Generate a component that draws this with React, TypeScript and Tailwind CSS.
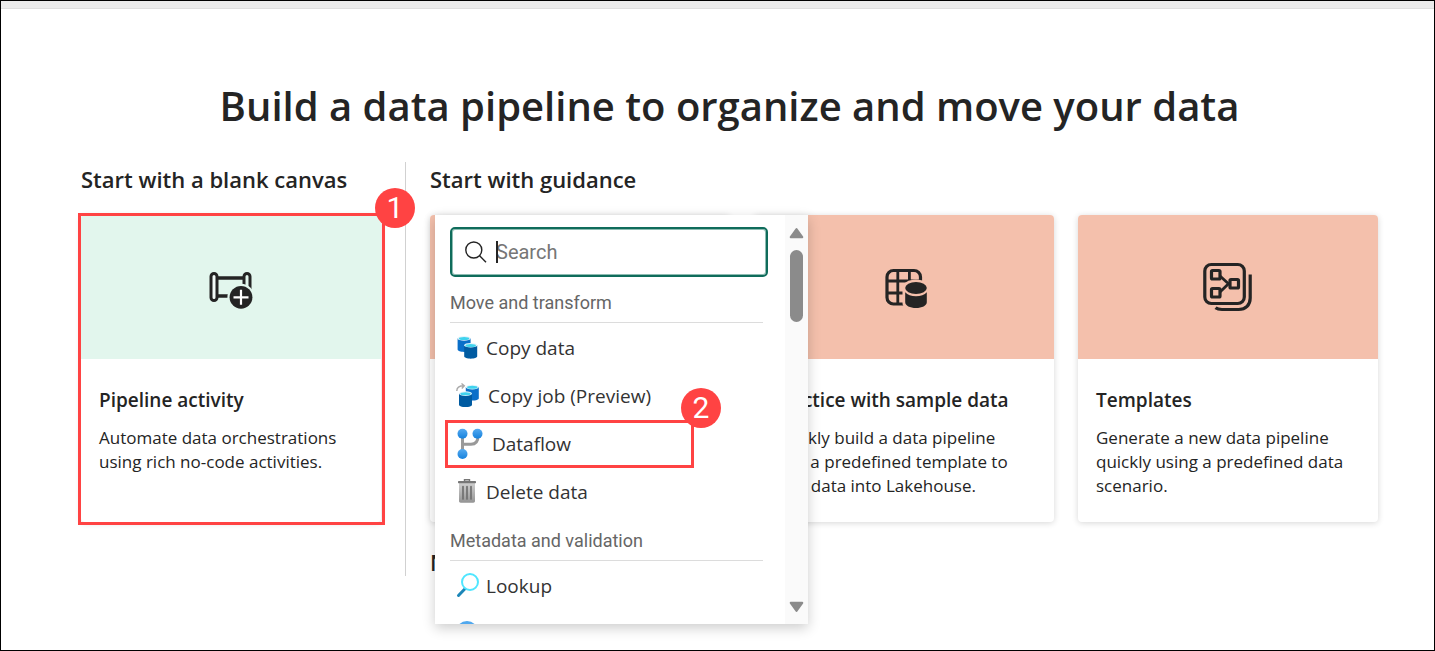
import type { ReactNode } from "react";

function PipelineIcon() {
  return (
    <svg viewBox="0 0 48 48" className="size-12 overflow-visible" fill="none" aria-hidden="true">
      <path d="M10 15h27M10 33h14" stroke="#242424" strokeWidth="3.4" />
      <rect x="4" y="10.5" width="6" height="27" rx="3" stroke="#242424" strokeWidth="3" fill="#fff" fillOpacity=".6" />
      <rect x="37" y="10.5" width="6" height="27" rx="3" stroke="#242424" strokeWidth="3" />
      <circle cx="34" cy="34.3" r="13.6" fill="#e2f6ed" />
      <circle cx="34" cy="34.3" r="11.4" fill="#242424" />
      <path d="M34 26.8v15M26.5 34.3h15" stroke="#fff" strokeWidth="2.2" />
    </svg>
  );
}

function SampleDataIcon() {
  return (
    <svg viewBox="0 0 48 48" className="size-12 overflow-visible" fill="none" aria-hidden="true">
      <rect x="7" y="7.5" width="33.5" height="33.5" rx="6.5" stroke="#242424" strokeWidth="3.2" />
      <path d="M17.8 7v34M29.4 7v34M7 18h33M7 30h33" stroke="#242424" strokeWidth="2.8" />
      <path d="M22.5 25c0-5 6-8.5 13.5-8.5S49.5 20 49.5 25v15c0 5-6 8-13.5 8s-13.5-3-13.5-8z" fill="#f4c0ac" />
      <ellipse cx="36" cy="25" rx="10.8" ry="5.9" fill="#242424" />
      <path d="M25.2 29.3c2.2 2.5 6.2 3.9 10.8 3.9s8.6-1.4 10.8-3.9v10c0 3.4-4.8 5.8-10.8 5.8s-10.8-2.4-10.8-5.8z" fill="#242424" />
    </svg>
  );
}

function TemplatesIcon() {
  return (
    <svg viewBox="0 0 48 48" className="size-12 overflow-visible" fill="none" stroke="#242424" strokeWidth="3.2" aria-hidden="true">
      <rect x="0.8" y="1.5" width="39.5" height="39" rx="6.5" />
      <path d="M46.2 11.5V35c0 7-4.5 11.5-11.5 11.5H18c-3 0-5-.6-6.5-1.8" />
      <rect x="7.5" y="7.5" width="8.5" height="8.5" rx="1" />
      <rect x="7.5" y="25.5" width="8.5" height="8.5" rx="1" />
      <rect x="26" y="16.5" width="8.5" height="8.5" rx="1" />
      <path d="M16 13l8.5 7.8L16 29" strokeWidth="2.8" />
    </svg>
  );
}

function Cylinder({ x, y, dark }: { x: number; y: number; dark?: boolean }) {
  return (
    <g transform={`translate(${x} ${y})`}>
      <path d="M0 2.3v11.2c0 1.3 2.9 2.4 6.5 2.4s6.5-1.1 6.5-2.4V2.3z" fill={dark ? "#005ba1" : "#0a6fc9"} />
      <ellipse cx="6.5" cy="2.4" rx="6.5" ry="2.3" fill="#e4f4fb" />
      <ellipse cx="6.5" cy="2.6" rx="5.2" ry="1.5" fill="#3fd3ee" />
    </g>
  );
}

function CopyDataIcon() {
  return (
    <svg viewBox="0 0 22 24" className="h-6 w-[22px] shrink-0 overflow-visible" aria-hidden="true">
      <Cylinder x={1.6} y={0} />
      <Cylinder x={8.2} y={6.8} dark />
    </svg>
  );
}

function CopyJobIcon() {
  return (
    <svg viewBox="0 0 24 24" className="h-6 w-6 shrink-0 overflow-visible" aria-hidden="true">
      <path d="M.8 7C.8 3.5 3 1.8 8 1.8M5.500-.5l2.8 2.3-2.5 2.7" fill="none" stroke="#a9a9a9" strokeWidth="1.4" />
      <Cylinder x={9.8} y={0.7} />
      <Cylinder x={3} y={7.2} dark />
    </svg>
  );
}

function DataflowIcon() {
  return (
    <svg viewBox="0 0 28 32" className="h-8 w-7 shrink-0" aria-hidden="true">
      <defs>
        <linearGradient id="node" x1="0" y1="0" x2="0" y2="1">
          <stop offset="0" stopColor="#55aaf0" />
          <stop offset="1" stopColor="#1681dc" />
        </linearGradient>
      </defs>
      <path d="M6.5 6v20M6.5 16.2H15c4.5 0 7-3 7-8" fill="none" stroke="#999" strokeWidth="3" />
      <circle cx="6.5" cy="5.7" r="5" fill="url(#node)" />
      <circle cx="21.5" cy="5.7" r="5" fill="url(#node)" />
      <circle cx="6.5" cy="26" r="5" fill="url(#node)" />
    </svg>
  );
}

function TrashIcon() {
  return (
    <svg viewBox="0 0 22 26" className="h-[26px] w-[22px] shrink-0" aria-hidden="true">
      <defs>
        <linearGradient id="bin" x1="0" y1="0" x2="0" y2="1">
          <stop offset="0" stopColor="#cfcfcf" />
          <stop offset="1" stopColor="#949494" />
        </linearGradient>
      </defs>
      <path d="M8.5 2V.8h5V2" fill="none" stroke="#777" strokeWidth="1.4" />
      <path d="M3 4h16v18c0 1-.7 1.7-1.7 1.7H4.7c-1 0-1.7-.7-1.7-1.7z" fill="url(#bin)" />
      <rect x="2" y="2" width="18" height="2.2" rx=".6" fill="#777" />
      <path d="M7 7.5V20M11 7.5V20M15 7.5V20" stroke="#707070" strokeWidth="1.7" strokeLinecap="round" />
    </svg>
  );
}

function LookupIcon() {
  return (
    <svg viewBox="0 0 22 24" className="h-6 w-[22px] shrink-0 overflow-visible" fill="none" aria-hidden="true">
      <path d="M9 14.8L2.5 21.5" stroke="#1c86b8" strokeWidth="3" strokeLinecap="round" />
      <circle cx="14" cy="8" r="8" stroke="#50e6ff" strokeWidth="2" fill="#fff" />
    </svg>
  );
}

function Step({ label, place }: { label: string; place: string }) {
  return (
    <span
      className={`absolute z-20 flex size-10 items-center justify-center rounded-full bg-[#ff4343] font-[Roboto,sans-serif] text-[30px] leading-10 text-white ${place}`}
    >
      {label}
    </span>
  );
}

type CardProps = { title: string; lines: string[]; icon: ReactNode; tone: string };

function Card({ title, lines, icon, tone }: CardProps) {
  return (
    <a href="#" className="flex min-h-[307px] flex-col overflow-hidden rounded bg-white shadow-[0_1px_6px_rgba(0,0,0,0.16)]">
      <span className={`flex h-36 items-center justify-center ${tone}`}>{icon}</span>
      <span className="flex flex-col gap-3 px-[18px] pt-[27px] pb-6">
        <span className="text-[19px] leading-7 font-semibold whitespace-nowrap">{title}</span>
        <span className="text-[17px] leading-6">
          {lines.map((line) => (
            <span key={line} className="block whitespace-nowrap">
              {line}
            </span>
          ))}
        </span>
      </span>
    </a>
  );
}

function Category({ children }: { children: ReactNode }) {
  return (
    <h3 className="mr-[22px] ml-[15px] border-b border-[#dcdcdc] pt-3.5 pb-[7px] font-[Roboto,sans-serif] text-[18px] leading-6 text-[#666]">
      {children}
    </h3>
  );
}

type ItemProps = { icon: ReactNode; label?: string; name?: string; children?: ReactNode };

function Item({ icon, label, name, children }: ItemProps) {
  return (
    <li className="relative">
      <button
        type="button"
        aria-label={name}
        className="flex h-12 w-full items-center gap-2 pt-0.5 pl-[21px] text-left text-[19px] leading-7 text-[#333]"
      >
        {icon}
        {label}
      </button>
      {children}
    </li>
  );
}

function ActivityMenu() {
  return (
    <div className="absolute top-0 left-[5px] z-10 flex h-[409px] w-[373px] bg-white shadow-[0_4px_12px_rgba(0,0,0,0.2)]">
      <div className="min-w-0 flex-1 overflow-hidden pt-3">
        <label className="relative mr-[17px] ml-[15px] flex h-[50px] items-center gap-2 rounded-[5px] border-2 border-[#0f6c5b] pl-3 font-[Roboto,sans-serif] text-[20px] shadow-[inset_0_0_0_1px_#8dbcb2]">
          <svg viewBox="0 0 24 24" className="size-6 shrink-0" fill="none" stroke="#242424" strokeWidth="1.4" aria-hidden="true">
            <circle cx="9.8" cy="10" r="8" />
            <path d="M15.6 15.8l6.4 6.4" />
          </svg>
          <span className="absolute left-11 h-[22px] w-0.5 bg-[#242424]" />
          <input
            type="text"
            aria-label="Search"
            placeholder="Search"
            className="h-8 min-w-0 flex-1 bg-transparent caret-transparent outline-none placeholder:text-[#767676]"
          />
        </label>
        <Category>Move and transform</Category>
        <ul>
          <Item icon={<CopyDataIcon />} label="Copy data" />
          <Item icon={<CopyJobIcon />} label="Copy job (Preview)" />
          <Item icon={<DataflowIcon />} label="Dataflow">
            <span className="pointer-events-none absolute top-px left-2.5 h-12 w-[249px] border-3 border-[#ff4343]" />
            <Step label="2" place="-top-[31px] left-[246px]" />
          </Item>
          <Item icon={<TrashIcon />} label="Delete data" />
        </ul>
        <Category>Metadata and validation</Category>
        <ul>
          <Item icon={<LookupIcon />} label="Lookup" />
          <Item
            name="Get metadata"
            icon={
              <svg viewBox="0 0 22 26" className="h-[26px] w-[22px] shrink-0" aria-hidden="true">
                <circle cx="11" cy="11" r="11" fill="#50a8ee" />
              </svg>
            }
          />
        </ul>
      </div>
      <div className="flex w-[23px] flex-col items-center bg-[#fafafa] pt-3 pb-[11px]" aria-hidden="true">
        <svg viewBox="0 0 16 12" className="h-3 w-4">
          <path d="M7.5 2l5.8 8.2H1.7z" fill="#8b8b8b" stroke="#8b8b8b" strokeWidth="2" strokeLinejoin="round" />
        </svg>
        <span className="mt-[11px] h-[72px] w-[13px] rounded-full bg-[#8b8b8b]" />
        <svg viewBox="0 0 16 12" className="mt-auto h-3 w-4">
          <path d="M7.5 10l5.8-8.2H1.7z" fill="#8b8b8b" stroke="#8b8b8b" strokeWidth="2" strokeLinejoin="round" />
        </svg>
      </div>
    </div>
  );
}

export default function App() {
  return (
    <div className="min-h-screen border border-black bg-white font-['Open_Sans','Noto_Sans',sans-serif] text-[#242424]">
      <div className="h-2 border-b border-[#dedede] bg-[#ebebeb]" />
      <main className="pt-[67px] pr-14 pl-20">
        <h1 className="text-center text-[40px] leading-[60px] font-semibold whitespace-nowrap">
          Build a data pipeline to organize and move your data
        </h1>
        <div className="mt-[26px] flex gap-6">
          <section className="w-[300px] shrink-0 pt-[3px]">
            <h2 className="text-[22px] leading-7 font-semibold whitespace-nowrap">Start with a blank canvas</h2>
            <div className="relative mt-[22px]">
              <Card
                title="Pipeline activity"
                lines={["Automate data orchestrations", "using rich no-code activities."]}
                tone="bg-[#e2f6ed]"
                icon={<PipelineIcon />}
              />
              <span className="pointer-events-none absolute -top-0.5 -right-1 -bottom-[3px] -left-[3px] border-3 border-[#ff4343]" />
              <Step label="1" place="-top-[27px] -right-[34px]" />
            </div>
          </section>
          <div className="w-px bg-[#d1d1d1]" />
          <section className="min-w-0 flex-1 pt-[3px]">
            <h2 className="text-[22px] leading-7 font-semibold whitespace-nowrap">Start with guidance</h2>
            <div className="relative mt-[22px] grid grid-cols-3 gap-6">
              <Card title="" lines={[]} tone="bg-[#f4c0ac]" icon={null} />
              <Card
                title="Practice with sample data"
                lines={["Quickly build a data pipeline", "with a predefined template to", "load data into Lakehouse."]}
                tone="bg-[#f4c0ac]"
                icon={<SampleDataIcon />}
              />
              <Card
                title="Templates"
                lines={["Generate a new data pipeline", "quickly using a predefined data", "scenario."]}
                tone="bg-[#f4c0ac]"
                icon={<TemplatesIcon />}
              />
              <ActivityMenu />
            </div>
            <h2 className="mt-[26px] text-[22px] leading-7 font-semibold">New</h2>
          </section>
        </div>
      </main>
    </div>
  );
}
